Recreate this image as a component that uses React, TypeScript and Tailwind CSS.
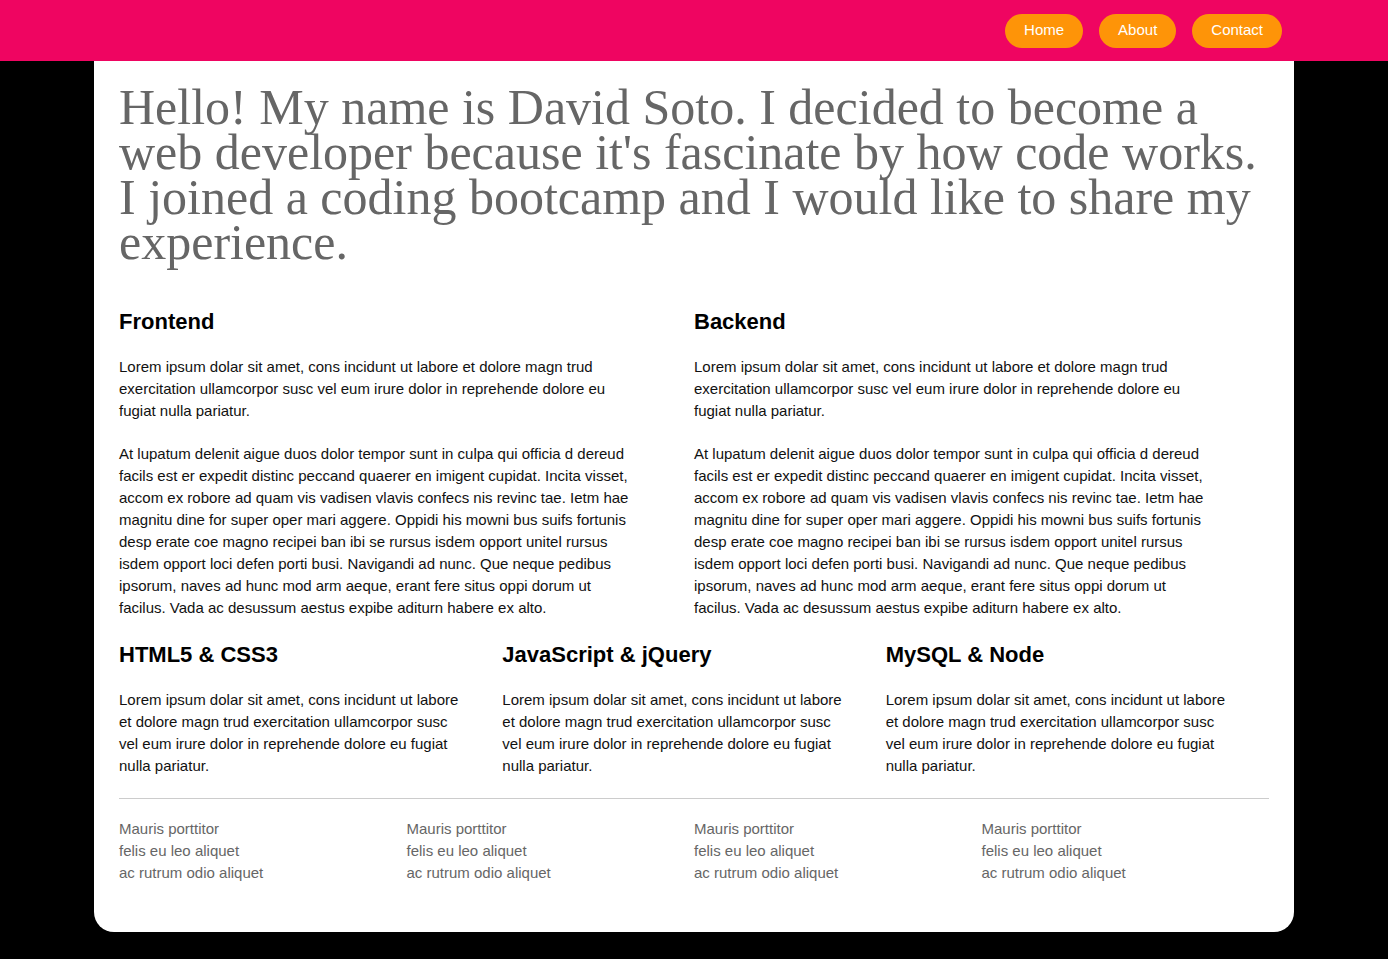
const lorem =
  'Lorem ipsum dolar sit amet, cons incidunt ut labore et dolore magn trud exercitation ullamcorpor susc vel eum irure dolor in reprehende dolore eu fugiat nulla pariatur.';

const atLupatum =
  'At lupatum delenit aigue duos dolor tempor sunt in culpa qui officia d dereud facils est er expedit distinc peccand quaerer en imigent cupidat. Incita visset, accom ex robore ad quam vis vadisen vlavis confecs nis revinc tae. Ietm hae magnitu dine for super oper mari aggere. Oppidi his mowni bus suifs fortunis desp erate coe magno recipei ban ibi se rursus isdem opport unitel rursus isdem opport loci defen porti busi. Navigandi ad nunc. Que neque pedibus ipsorum, naves ad hunc mod arm aeque, erant fere situs oppi dorum ut facilus. Vada ac desussum aestus expibe aditurn habere ex alto.';

const navItems = ['Home', 'About', 'Contact'];

function Header() {
  return (
    <header className="h-[61px] bg-[#ef0561] flex items-center justify-end gap-[16px] pr-[106px]">
      {navItems.map((item) => (
        <a
          key={item}
          href="#"
          className="h-[34px] px-[19px] flex items-center rounded-full bg-[#fe9408] text-white text-[15px]"
        >
          {item}
        </a>
      ))}
    </header>
  );
}

function Column({ title, paragraphs }: { title: string; paragraphs: string[] }) {
  return (
    <div>
      <h2 className="text-[22px] leading-[26px] font-bold text-black">{title}</h2>
      {paragraphs.map((p, i) => (
        <p key={i} className="w-[90%] mt-[21px] text-[15px] leading-[22px] text-[#111]">
          {p}
        </p>
      ))}
    </div>
  );
}

export default function App() {
  return (
    <div className="min-h-screen bg-black font-['Liberation_Sans',Arial,sans-serif]">
      <Header />
      <main className="w-[1200px] mx-auto bg-white rounded-b-[20px] px-[25px] pt-[24px] pb-[48px]">
        <h1 className="font-['Liberation_Serif','Times_New_Roman',serif] text-[50px] leading-[45px] text-[#666]">
          Hello! My name is David Soto. I decided to become a web developer because it's fascinate by how code works.
          I joined a coding bootcamp and I would like to share my experience.
        </h1>

        <section className="grid grid-cols-2 mt-[44px]">
          <Column title="Frontend" paragraphs={[lorem, atLupatum]} />
          <Column title="Backend" paragraphs={[lorem, atLupatum]} />
        </section>

        <section className="grid grid-cols-3 mt-[23px]">
          <Column title="HTML5 & CSS3" paragraphs={[lorem]} />
          <Column title="JavaScript & jQuery" paragraphs={[lorem]} />
          <Column title="MySQL & Node" paragraphs={[lorem]} />
        </section>

        <footer className="mt-[21px] border-t border-[#cccccc] pt-[19px] grid grid-cols-4 text-[15px] leading-[22px] text-[#666]">
          {[0, 1, 2, 3].map((i) => (
            <ul key={i}>
              <li>Mauris porttitor</li>
              <li>felis eu leo aliquet</li>
              <li>ac rutrum odio aliquet</li>
            </ul>
          ))}
        </footer>
      </main>
    </div>
  );
}
